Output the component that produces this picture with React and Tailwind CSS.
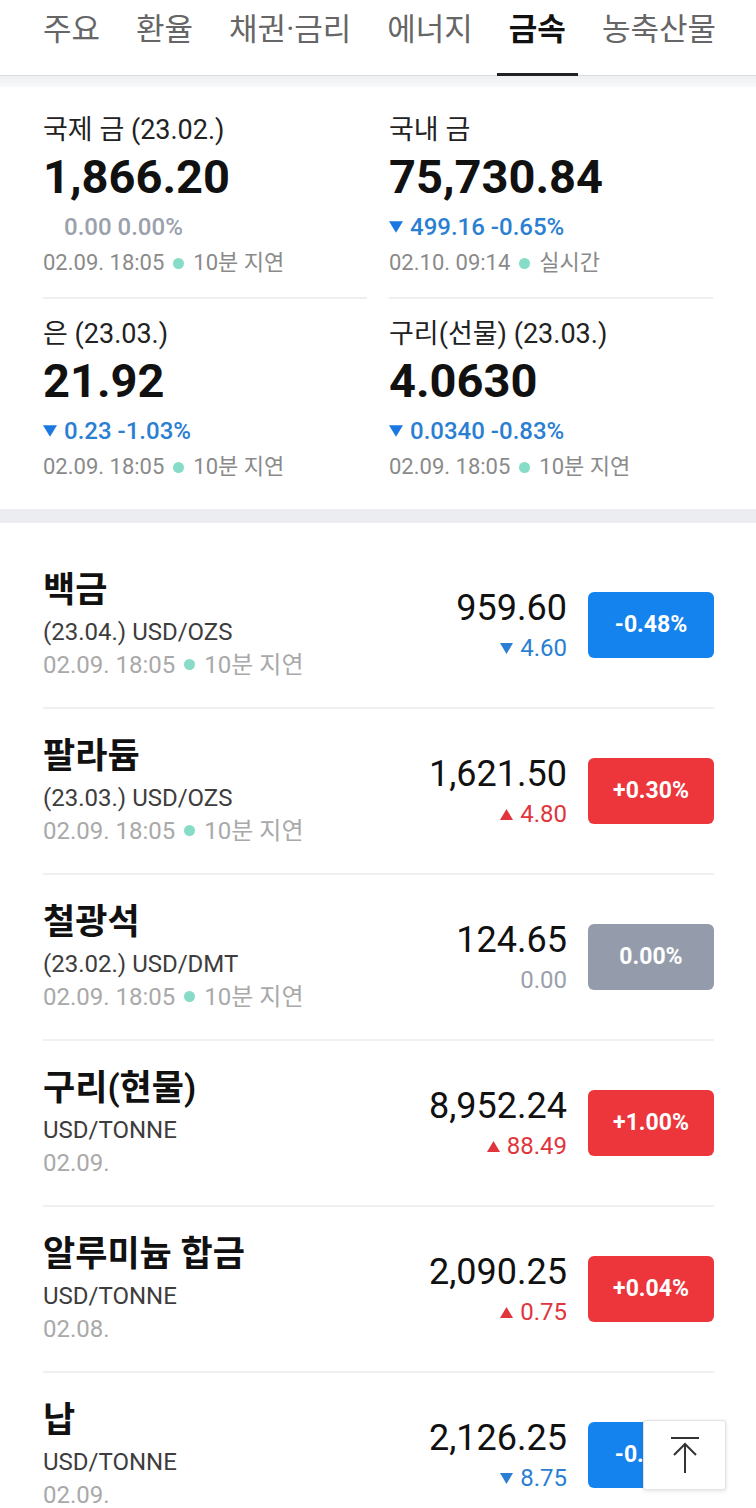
const tabs = ['주요', '환율', '채권·금리', '에너지', '금속', '농축산물'];

const summary = [
  { title: '국제 금 (23.02.)', value: '1,866.20', dir: 'flat', change: '0.00 0.00%', time: '02.09. 18:05', status: '10분 지연' },
  { title: '국내 금', value: '75,730.84', dir: 'down', change: '499.16 -0.65%', time: '02.10. 09:14', status: '실시간' },
  { title: '은 (23.03.)', value: '21.92', dir: 'down', change: '0.23 -1.03%', time: '02.09. 18:05', status: '10분 지연' },
  { title: '구리(선물) (23.03.)', value: '4.0630', dir: 'down', change: '0.0340 -0.83%', time: '02.09. 18:05', status: '10분 지연' },
];

const metals = [
  { name: '백금', sub: '(23.04.) USD/OZS', time: '02.09. 18:05', status: '10분 지연', price: '959.60', change: '4.60', dir: 'down', pct: '-0.48%' },
  { name: '팔라듐', sub: '(23.03.) USD/OZS', time: '02.09. 18:05', status: '10분 지연', price: '1,621.50', change: '4.80', dir: 'up', pct: '+0.30%' },
  { name: '철광석', sub: '(23.02.) USD/DMT', time: '02.09. 18:05', status: '10분 지연', price: '124.65', change: '0.00', dir: 'flat', pct: '0.00%' },
  { name: '구리(현물)', sub: 'USD/TONNE', time: '02.09.', price: '8,952.24', change: '88.49', dir: 'up', pct: '+1.00%' },
  { name: '알루미늄 합금', sub: 'USD/TONNE', time: '02.08.', price: '2,090.25', change: '0.75', dir: 'up', pct: '+0.04%' },
  { name: '납', sub: 'USD/TONNE', time: '02.09.', price: '2,126.25', change: '8.75', dir: 'down', pct: '-0.41%' },
];

const Tri = ({ dir, className }) => (
  <svg viewBox="0 0 12 10" className={className}>
    {dir === 'down' ? <path d="M0 0h12L6 10z" fill="currentColor" /> : <path d="M6 0l6 10H0z" fill="currentColor" />}
  </svg>
);

const Status = ({ time, status, size }) => (
  <div className={`flex items-center ${size}`}>
    <span>{time}</span>
    {status && (
      <>
        <span className="mx-[9px] h-[11px] w-[11px] rounded-full bg-[#86dcc6]" />
        <span>{status}</span>
      </>
    )}
  </div>
);

const SummaryCard = ({ item, first }) => {
  const color = item.dir === 'down' ? 'text-[#2b7fd2]' : item.dir === 'up' ? 'text-[#e0353c]' : 'text-[#9aa1ac]';
  return (
    <div className={first ? 'pt-[26px] pb-[20px]' : 'pt-[18px] pb-[28px] border-t-2 border-[#eeeff1]'}>
      <div className="text-[27px] leading-[34px] text-[#222]">{item.title}</div>
      <div className="mt-[3px] text-[47px] leading-[54px] font-bold text-[#111]">{item.value}</div>
      <div className={`mt-[8px] flex items-center text-[24px] leading-[30px] font-medium ${color}`}>
        {item.dir === 'flat' ? (
          <span className="w-[21px]" />
        ) : (
          <Tri dir={item.dir} className="mr-[7px] h-[12px] w-[14px] text-[#1a78e0]" />
        )}
        <span>{item.change}</span>
      </div>
      <div className="mt-[7px] leading-[28px] text-[#8a8a8a]">
        <Status time={item.time} status={item.status} size="text-[22px]" />
      </div>
    </div>
  );
};

const MetalRow = ({ item }) => {
  const color = item.dir === 'down' ? 'text-[#2b7fd2]' : item.dir === 'up' ? 'text-[#e0353c]' : 'text-[#9aa1ac]';
  const badge = item.dir === 'down' ? 'bg-[#1583ee]' : item.dir === 'up' ? 'bg-[#ec363b]' : 'bg-[#949cab]';
  return (
    <div className="flex h-[166px] items-center justify-between border-b-2 border-[#f0f0f0]">
      <div>
        <div className="text-[35px] leading-[40px] font-semibold text-[#111]">{item.name}</div>
        <div className="mt-[6px] text-[24px] leading-[30px] text-[#3d3d3d]">{item.sub}</div>
        <div className="mt-[3px] leading-[30px] text-[#a9a9a9]">
          <Status time={item.time} status={item.status} size="text-[24px]" />
        </div>
      </div>
      <div className="flex items-center gap-[21px]">
        <div className="flex flex-col items-end">
          <div className="text-[36px] leading-[40px] text-[#111]">{item.price}</div>
          <div className={`mt-[6px] flex items-center text-[24px] leading-[28px] ${color}`}>
            {item.dir !== 'flat' && <Tri dir={item.dir} className="mr-[7px] h-[11px] w-[13px]" />}
            <span>{item.change}</span>
          </div>
        </div>
        <div className={`flex h-[66px] w-[126px] items-center justify-center rounded-[6px] text-[23px] font-bold text-white ${badge}`}>
          {item.pct}
        </div>
      </div>
    </div>
  );
};

const App = () => {
  return (
    <div className="relative h-[1508px] overflow-hidden bg-white font-[Roboto,'Noto_Sans_CJK_KR',sans-serif]">
      <div className="flex h-[76px] gap-[12px] border-b border-[#d8dce1] px-[31px]">
        {tabs.map((t) => (
          <div key={t} className="relative px-[12px] pt-[11px]">
            <span className={`whitespace-nowrap text-[31px] leading-[38px] ${t === '금속' ? 'font-bold text-[#111]' : 'text-[#666]'}`}>
              {t}
            </span>
            {t === '금속' && <span className="absolute bottom-[-1px] left-0 right-0 h-[3px] bg-[#222]" />}
          </div>
        ))}
      </div>
      <div className="h-[11px] bg-gradient-to-b from-[#eef0f2] to-[#f8f9fa]" />

      <div className="grid grid-cols-2 gap-x-[22px] px-[43px]">
        {summary.map((item, i) => (
          <SummaryCard key={item.title} item={item} first={i < 2} />
        ))}
      </div>

      <div className="h-[14px] bg-[#ebedf0]" />

      <div className="px-[42px] pt-[20px] pl-[43px]">
        {metals.map((item) => (
          <MetalRow key={item.name} item={item} />
        ))}
      </div>

      <button className="absolute bottom-[18px] right-[30px] flex h-[70px] w-[83px] items-center justify-center rounded-[3px] border border-[#e3e3e3] bg-white shadow-[0_1px_4px_rgba(0,0,0,0.12)]">
        <svg viewBox="0 0 30 40" className="h-[40px] w-[30px]" fill="none" stroke="#333" strokeWidth="2">
          <path d="M1 3h28" />
          <path d="M15 38V9" />
          <path d="M4 20L15 9l11 11" />
        </svg>
      </button>
    </div>
  );
};

export default App;
